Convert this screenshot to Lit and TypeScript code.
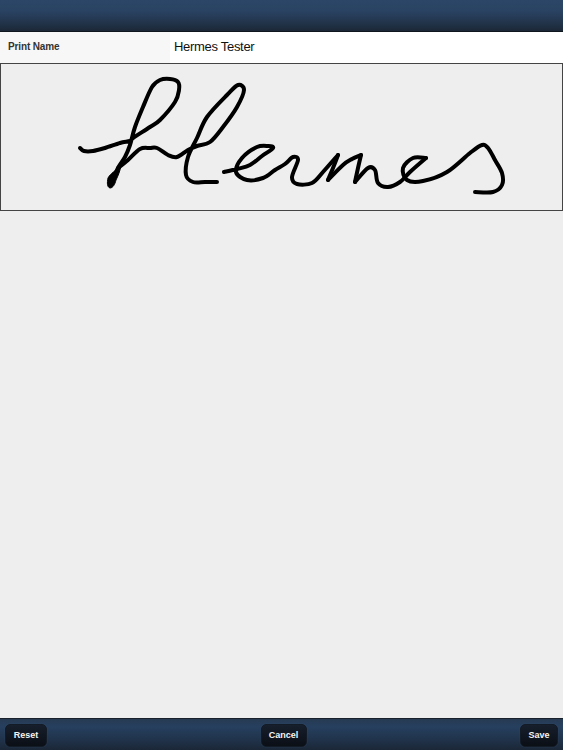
import { LitElement, html, css, svg } from "lit";
import { customElement } from "lit/decorators.js";

type P = [number, number];

const strokes: P[][] = [
  [[80,148],[84,151],[93,151],[105,148],[120,143],[130,141],[133,138],[150,127],[160,120],[175,102],[179,90],[178,82],[170,79],[160,80],[152,87],[143,107],[135,127],[130,145],[125,157],[118,168],[111,184]],
  [[118,168],[128,160],[140,149],[150,148],[157,148],[168,155],[177,157],[188,150],[197,146],[210,142],[223,127],[237,107],[244,90],[238,85],[227,95],[207,117],[197,138],[188,157],[186,175],[193,182],[205,182],[217,182]],
  [[224,172],[237,169],[250,165],[262,156],[273,148],[268,146],[257,147],[242,158],[236,172],[247,180],[263,178],[275,170],[285,164],[293,157],[298,160],[292,177],[297,184],[312,183],[323,172],[338,155]],
  [[338,155],[333,168],[328,180]],
  [[328,180],[343,165],[352,159],[361,155]],
  [[361,155],[358,168],[355,182]],
  [[355,182],[368,168],[375,170],[378,183],[388,187],[400,182],[410,172],[426,158]],
  [[426,158],[413,158],[403,168],[407,180],[423,181],[447,172],[470,153],[482,145],[488,148],[495,160],[502,173],[502,185],[493,192],[475,192]],
];

const toPath = (pts: P[]) => {
  let d = `M${pts[0][0]} ${pts[0][1]}`;
  for (let i = 0; i < pts.length - 1; i++) {
    const p0 = pts[Math.max(i - 1, 0)];
    const p1 = pts[i];
    const p2 = pts[i + 1];
    const p3 = pts[Math.min(i + 2, pts.length - 1)];
    const c1x = p1[0] + (p2[0] - p0[0]) / 6;
    const c1y = p1[1] + (p2[1] - p0[1]) / 6;
    const c2x = p2[0] - (p3[0] - p1[0]) / 6;
    const c2y = p2[1] - (p3[1] - p1[1]) / 6;
    d += `C${c1x.toFixed(1)} ${c1y.toFixed(1)} ${c2x.toFixed(1)} ${c2y.toFixed(1)} ${p2[0]} ${p2[1]}`;
  }
  return d;
};

@customElement("app-root")
export class AppRoot extends LitElement {
  static styles = css`
    :host {
      display: flex;
      flex-direction: column;
      width: 563px;
      height: 750px;
      background: #eeeeee;
      font-family: "Liberation Sans", Arial, sans-serif;
      overflow: hidden;
    }
    .topbar {
      height: 31px;
      flex: none;
      background: linear-gradient(#2b4667 0%, #2a4363 35%, #203146 80%, #1b2736 100%);
      border-bottom: 1px solid #10161e;
    }
    .row {
      height: 31px;
      flex: none;
      display: grid;
      grid-template-columns: 170px 1fr;
      background: #fff;
    }
    .label {
      background: #f7f7f7;
      display: flex;
      align-items: center;
      padding: 0 0 3px 8px;
      font-size: 10px;
      letter-spacing: -0.13px;
      font-weight: bold;
      color: #333;
    }
    .value {
      display: flex;
      align-items: center;
      padding: 0 0 3px 4px;
      font-size: 13px;
      letter-spacing: -0.3px;
      color: #111;
    }
    .pad {
      height: 148px;
      flex: none;
      box-sizing: border-box;
      border: 1px solid #444;
      background: #eeeeee;
    }
    .pad svg {
      display: block;
      width: 561px;
      height: 146px;
    }
    .spacer {
      flex: 1;
    }
    .footer {
      height: 32px;
      flex: none;
      box-sizing: border-box;
      display: flex;
      justify-content: space-between;
      align-items: center;
      padding: 1px 5px 0;
      background: linear-gradient(#273a52 0%, #26405f 25%, #1f3046 75%, #1b2736 100%);
      border-top: 1px solid #18202b;
    }
    button {
      height: 23px;
      padding: 0;
      border: 1px solid #131b26;
      border-radius: 5px;
      background: linear-gradient(#161f2c 0%, #0b0f16 100%);
      color: #f4f4f4;
      font: bold 9px "Liberation Sans", Arial, sans-serif;
      box-shadow: 0 0 1px rgba(90, 120, 160, 0.5);
    }
    .reset { width: 42px; }
    .cancel { width: 46px; }
    .save { width: 38px; }
  `;

  render() {
    return html`
      <div class="topbar"></div>
      <div class="row">
        <div class="label">Print Name</div>
        <div class="value">Hermes Tester</div>
      </div>
      <div class="pad">
        <svg viewBox="1 64 561 146" fill="none" stroke="#000" stroke-width="4" stroke-linecap="round" stroke-linejoin="round">
          ${strokes.map((s) => svg`<path d=${toPath(s)}></path>`)}
          <path d="M121 166C116 170 110 174 108 178C107 183 107 187 110 188C113 188 115 184 116 180C118 176 120 171 121 166Z" fill="#000" stroke-width="1"></path>
        </svg>
      </div>
      <div class="spacer"></div>
      <div class="footer">
        <button class="reset">Reset</button>
        <button class="cancel">Cancel</button>
        <button class="save">Save</button>
      </div>
    `;
  }
}
